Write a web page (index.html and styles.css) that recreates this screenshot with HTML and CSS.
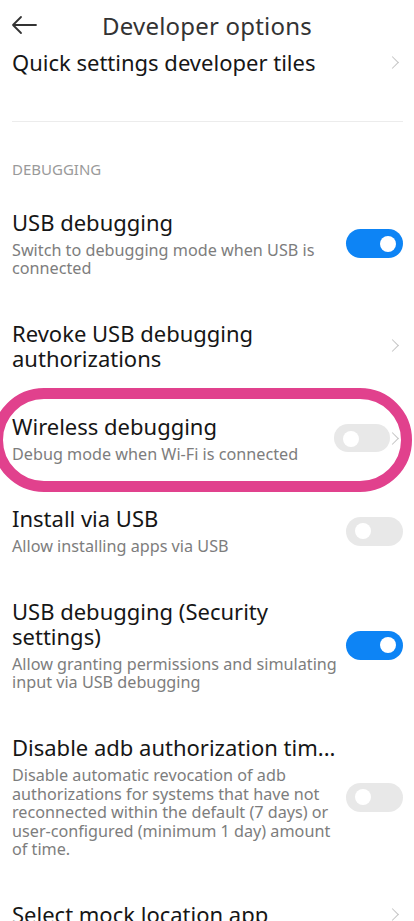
FILE: index.html
```html
<!DOCTYPE html>
<html>
<head>
<meta charset="utf-8">
<link rel="stylesheet" href="styles.css">
</head>
<body>
<div class="screen">
  <header class="topbar">
    <svg class="back" width="26" height="20" viewBox="0 0 26 20"><path d="M25 10H2M10 2L2 10l8 8" fill="none" stroke="#333" stroke-width="1.8" stroke-linecap="round" stroke-linejoin="round"/></svg>
    <h1 class="title">Developer options</h1>
  </header>
  <main class="list">
    <div class="row first">
      <div class="text"><div class="t">Quick settings developer tiles</div></div>
      <span class="chev"></span>
    </div>
    <div class="divider"></div>
    <div class="section">DEBUGGING</div>

    <div class="row">
      <div class="text">
        <div class="t">USB debugging</div>
        <div class="s">Switch to debugging mode when USB is connected</div>
      </div>
      <span class="toggle on"></span>
    </div>

    <div class="row">
      <div class="text">
        <div class="t">Revoke USB debugging authorizations</div>
      </div>
      <span class="chev"></span>
    </div>

    <div class="row circled">
      <div class="text">
        <div class="t">Wireless debugging</div>
        <div class="s">Debug mode when Wi-Fi is connected</div>
      </div>
      <span class="toggle off small"></span>
      <span class="chev"></span>
    </div>

    <div class="row">
      <div class="text">
        <div class="t">Install via USB</div>
        <div class="s">Allow installing apps via USB</div>
      </div>
      <span class="toggle off"></span>
    </div>

    <div class="row">
      <div class="text">
        <div class="t">USB debugging (Security settings)</div>
        <div class="s">Allow granting permissions and simulating input via USB debugging</div>
      </div>
      <span class="toggle on"></span>
    </div>

    <div class="row">
      <div class="text">
        <div class="t ell">Disable adb authorization tim...</div>
        <div class="s">Disable automatic revocation of adb authorizations for systems that have not reconnected within the default (7 days) or user-configured (minimum 1 day) amount of time.</div>
      </div>
      <span class="toggle off"></span>
    </div>

    <div class="row">
      <div class="text">
        <div class="t">Select mock location app</div>
      </div>
      <span class="chev"></span>
    </div>
  </main>
</div>
</body>
</html>
```

FILE: styles.css
```css
html, body {
  margin: 0;
  padding: 0;
  background: #fff;
}
body {
  font-family: "Noto Sans", "Open Sans", sans-serif;
  color: #1a1a1a;
}
.screen {
  width: 414px;
  height: 921px;
  overflow: hidden;
  position: relative;
}
.topbar {
  height: 50px;
  position: relative;
  z-index: 2;
  background: #fff;
  display: flex;
  align-items: center;
  justify-content: center;
}
.back {
  position: absolute;
  left: 11px;
  top: 15px;
}
.title {
  margin: 0;
  font-size: 24px;
  font-weight: 400;
  color: #333;
  letter-spacing: 0.2px;
}
.list {
  margin-top: 0;
}
.row {
  display: flex;
  align-items: center;
  padding: 21.5px 11px 21.5px 12px;
  position: relative;
}
.row.first {
  padding-top: 0;
  padding-bottom: 43px;
}
.text {
  flex: 1;
  min-width: 0;
  padding-right: 2px;
}
.t {
  font-size: 22px;
  line-height: 25px;
  color: #161616;
  padding-right: 20px;
}
.t.ell {
  white-space: nowrap;
  margin-right: -40px;
}
.s {
  margin-top: 6px;
  font-size: 16.2px;
  line-height: 18.6px;
  color: #7d7d7d;
}
.divider {
  height: 1px;
  background: #ececec;
  margin: 3px 11px 0 12px;
}
.section {
  padding: 38px 12px 10px;
  font-size: 15px;
  line-height: 18px;
  color: #9a9a9a;
}
.chev {
  width: 8px;
  height: 8px;
  border-top: 1.4px solid #c4c4c4;
  border-right: 1.4px solid #c4c4c4;
  transform: rotate(45deg);
  margin-right: 6px;
  flex: none;
}
.toggle {
  flex: none;
  width: 57px;
  height: 29px;
  border-radius: 15px;
  position: relative;
}
.toggle::after {
  content: "";
  position: absolute;
  top: 6.5px;
  width: 16px;
  height: 16px;
  border-radius: 50%;
  background: #fff;
}
.toggle.on {
  background: #0d84f5;
}
.toggle.on::after {
  right: 7px;
}
.toggle.off {
  background: #e8e8e8;
}
.toggle.off::after {
  left: 9px;
}
.toggle.small {
  width: 56px;
  height: 28px;
  margin-right: -2px;
  margin-left: 10px;
}
.circled::before {
  content: "";
  position: absolute;
  left: -8px;
  right: 2px;
  top: -4px;
  bottom: -7px;
  border: 11px solid #e1418d;
  border-radius: 52px;
  pointer-events: none;
}
```
